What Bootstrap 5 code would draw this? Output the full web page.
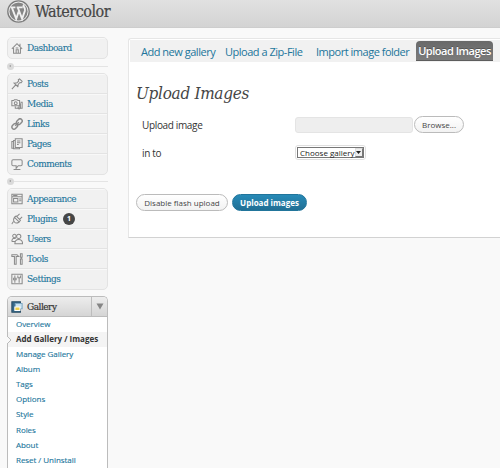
<!DOCTYPE html>
<html lang="en">
<head>
<meta charset="utf-8">
<title>Watercolor</title>
<link href="https://cdn.jsdelivr.net/npm/bootstrap@5.3.0/dist/css/bootstrap.min.css" rel="stylesheet">
<style>
html,body{height:468px;overflow:hidden}
body{background:#f9f9f9;font-family:"Open Sans","Noto Sans",sans-serif;font-size:11px;color:#333;line-height:1}
a{color:#21759b;text-decoration:none;white-space:nowrap}
svg{display:block;flex:none}
.serif{font-family:"DejaVu Serif Condensed","DejaVu Serif","Liberation Serif",serif}
.topbar{height:28px;background:linear-gradient(#e1e1e1,#d3d3d3);border-bottom:1px solid #cdcdcd;padding-left:7px;gap:5px}
.topbar svg{margin-top:-5px}
.site{font-size:16px;color:#464646;margin-top:-4px;letter-spacing:-.5px;-webkit-text-stroke:.2px #464646}
.side{width:101px;margin:9px 0 0 7px}
.box{border:1px solid #e3e3e3;border-radius:5px;background:#f1f1f1;overflow:hidden;width:101px}
.box a{height:20px;padding-left:3px;gap:4px;font-size:10px;letter-spacing:-.55px;border-bottom:1px solid #e3e3e3;box-shadow:inset 0 1px #f8f8f8;-webkit-text-stroke:.1px #21759b}
.box a:last-child{border-bottom:0}
.box svg,.ghead svg{width:12px;height:12px;fill:none;stroke:#8a8a8a;stroke-width:1.2}
.sep{height:14px}
.sep.short{height:13px}
.sep i{width:7px;height:7px;border-radius:50%;background:#dadada;position:relative}
.sep i::after{content:"";position:absolute;left:2px;top:2px;border:1.5px solid transparent;border-right:2px solid #999;border-left:0}
.sep b{height:1px;background:#e4e4e4;flex:1}
.count{width:12px;height:12px;border-radius:50%;background:#464646;color:#fff;font:bold 7px/12px "Open Sans",sans-serif;letter-spacing:0;text-align:center;margin-left:2px;-webkit-text-stroke:0}
.gal{border:1px solid #bcbcbc;border-bottom:0;border-radius:5px 5px 0 0;width:101px;height:173px;background:#fff;margin-top:6px}
.ghead{height:20px;background:linear-gradient(#ededed,#d5d5d5);border-bottom:1px solid #bcbcbc;border-radius:4px 4px 0 0;padding-left:3px}
.ghead span{font-size:10px;color:#333;margin-left:4px;letter-spacing:-.5px;-webkit-text-stroke:.2px #333}
.arrow{width:16px;height:19px;border-left:1px solid #bdbdbd}
.gal a{display:flex;align-items:center;height:15.15px;padding:0 0 2px 8px;font-size:8px;letter-spacing:-.05px;-webkit-text-stroke:.12px #21759b}
.gal a.on{background:#f4f4f4;color:#333;font-weight:700;letter-spacing:0;position:relative;-webkit-text-stroke:0}
.on svg{position:absolute;left:-1px;top:4px}
.panel{margin:10px 0 0 20px;height:200px;background:#fff;border:1px solid #e6e6e6;border-right:0;border-bottom-color:#d2d2d2;border-radius:3px 0 0 0;min-width:0}
.tabs{height:22px;background:#f1f1f1;margin:1px 0 0 1px;padding:1px 0 1px 11px;font-size:11px;letter-spacing:-.48px}
.tabs a{flex:none}
.tabs a.sel{width:77px;height:20px;background:linear-gradient(#696969,#7b7b7b);color:#fff;border-radius:4px 4px 0 0;font-weight:600;text-shadow:0 -1px #555;border-bottom:1px solid #5d5d5d}
h2{font-size:17px;font-style:italic;letter-spacing:-.3px;color:#464646;margin:21px 0 0 7px;line-height:20px}
.lab{width:153px;font-size:10px;letter-spacing:-.35px}
.r1{margin:13px 0 0 13px;height:17px}.r2{margin:12px 0 0 13px;height:15px}
.field{width:118px;height:16px;background:#eee;border:1px solid #e4e4e4;border-radius:3px;margin-right:1px}
.pill{height:17px;border:1px solid #bbb;border-radius:9px;background:linear-gradient(#fff,#f2f2f2);color:#464646;font-size:8px;padding:0;white-space:nowrap;line-height:15px}
.pick{width:71px;height:15px;border:1px solid #dfdfdf;border-radius:3px;padding:1px;background:#fff}
.pick>span{border:1px solid #777;font-size:8px;color:#222;padding-left:2px;height:11px;width:67px;white-space:nowrap}
.drop{width:10px;height:9px;background:#eee;border:1px solid #777;border-top-color:#ddd;border-left-color:#ddd}
.acts{margin:34px 0 0 7px;gap:4px}
.pill.blue{background:linear-gradient(#278ab7,#216f94);border-color:#21759b;color:#fff;font-weight:700}
</style>
</head>
<body>
<header class="topbar d-flex align-items-center">
<svg width="23" height="23" viewBox="0 0 23 23"><circle cx="11.5" cy="11.5" r="10.7" fill="#eee" stroke="#7c7c7c" stroke-width="1.3"/><circle cx="11.5" cy="11.5" r="9.1" fill="#858585"/><path d="M3.4 7.4h5M9.700 7.400h6M5 7.800l4.200 11 2.500-7.200M10.900 7.800l4.200 11 2.800-8.100q.5-2.200-.9-3.700-1.200-1.600.4-2.100" fill="none" stroke="#f0f0f0" stroke-width="1.9"/></svg>
<span class="serif site">Watercolor</span>
</header>
<div class="d-flex">
<nav class="side flex-shrink-0">
<div class="box serif"><a class="d-flex align-items-center" href="#"><svg viewBox="0 0 14 14"><path d="M1 8l6-6 6 6M3 7v6h8V7M6 13V9h2.500v4M10.500 5V2M5.500 7h3"/></svg><span>Dashboard</span></a></div>
<div class="sep d-flex align-items-center"><i></i><b></b></div>
<div class="box serif">
<a class="d-flex align-items-center" href="#"><svg viewBox="0 0 14 14"><path d="M1 13l4.500-5M3 5.500l5.500 5M4 6l3-.5 2-2L8.500 2 10 1l3 3-1 1.500-1.500-.3-2 2L8 10"/></svg><span>Posts</span></a>
<a class="d-flex align-items-center" href="#"><svg viewBox="0 0 14 14"><path d="M1 3h2l1-1h3l1 1h2v6H1zM11 5h2v7H5v-2M11 6v6"/><circle cx="5.500" cy="6" r="1.700"/><circle cx="9.500" cy="11.500" r="1.300"/></svg><span>Media</span></a>
<a class="d-flex align-items-center" href="#"><svg viewBox="0 0 14 14"><g transform="rotate(-45 7 7)" stroke-width="1.700"><rect x="-.5" y="4.500" width="7.500" height="5" rx="2.500"/><rect x="7" y="4.500" width="7.500" height="5" rx="2.500"/><path d="M4 7h6"/></g></svg><span>Links</span></a>
<a class="d-flex align-items-center" href="#"><svg viewBox="0 0 14 14"><path d="M5 1h8v10H5zM5 3H3v9.500h7V11M3 4H1v8h2M7 3.500h4M7 5.500h4M7 7.500h2"/></svg><span>Pages</span></a>
<a class="d-flex align-items-center" href="#"><svg viewBox="0 0 14 14"><path d="M2.500 2h9q1.500 0 1.500 1.500v4Q13 9 11.500 9H8.500L6 12V9H2.500Q1 9 1 7.500v-4Q1 2 2.500 2zM3 13.500h8"/></svg><span>Comments</span></a>
</div>
<div class="sep short d-flex align-items-center"><i></i><b></b></div>
<div class="box serif">
<a class="d-flex align-items-center" href="#"><svg viewBox="0 0 14 14"><path d="M1 1.500h12v11H1zM1 4.500h12M3 6.500h5v4H3zM9.500 7H12M9.500 9H12M2.500 3h5"/></svg><span>Appearance</span></a>
<a class="d-flex align-items-center" href="#"><svg viewBox="0 0 14 14"><path d="M1 13q1-3 3-3M4 5l5.500 5.500Q6 13 4 10.500 2 8 4 5zM4 5l2-1.500 5 5-1.500 2M7 4l3-3M10 7.500l3-3"/></svg><span>Plugins</span><span class="count">1</span></a>
<a class="d-flex align-items-center" href="#"><svg viewBox="0 0 14 14"><circle cx="4" cy="3.500" r="2"/><circle cx="9" cy="4" r="2.500"/><path d="M4.500 12.500q0-5 4.500-5t4.500 5zM1 10q0-4 3-4l1.500.5M1 10h3.500"/></svg><span>Users</span></a>
<a class="d-flex align-items-center" href="#"><svg viewBox="0 0 14 14"><path d="M1 4V2h6l2 2H6v9H4V4zM11 1h2v4h-1v2h1v6h-2V7h1V5h-1z"/></svg><span>Tools</span></a>
<a class="d-flex align-items-center" href="#"><svg viewBox="0 0 14 14"><path d="M1 1.500h12v11H1zM4.500 3v3M3 6h3v2H3zM4.500 8v3.500M8 3v2.500h3V3M9.500 5.500v6"/></svg><span>Settings</span></a>
</div>
<div class="gal">
<div class="ghead d-flex align-items-center"><svg viewBox="0 0 14 14"><path d="M1 1h10v12H1z" fill="#376889" stroke="#294c64"/><path d="M5 3h8v6H5z" fill="#c9e2f1" stroke="#7fa9c4"/><path d="M4.500 7h6v4h-6z" fill="#eed04b" stroke="#fff"/></svg><span class="serif">Gallery</span><div class="arrow ms-auto d-flex align-items-center justify-content-center"><svg style="width:8px;height:7px" viewBox="0 0 8 7"><path d="M.5.500h7L4 6.500z" fill="#858585" stroke="none"/></svg></div></div>
<a href="#">Overview</a>
<a href="#" class="on"><svg width="5" height="8"><path d="M0 0l4 4-4 4" fill="#f9f9f9" stroke="#bbb"/></svg>Add Gallery / Images</a>
<a href="#">Manage Gallery</a><a href="#">Album</a><a href="#">Tags</a><a href="#">Options</a><a href="#">Style</a><a href="#">Roles</a><a href="#">About</a><a href="#">Reset / Uninstall</a>
</div>
</nav>
<main class="panel flex-grow-1">
<div class="tabs d-flex align-items-center"><a href="#" style="width:84px">Add new gallery</a><a href="#" style="width:91px">Upload a Zip-File</a><a href="#" style="width:100px">Import image folder</a><a href="#" class="sel d-flex align-items-center justify-content-center">Upload Images</a></div>
<h2 class="serif">Upload Images</h2>
<div class="r1 d-flex align-items-center"><label class="lab">Upload image</label><div class="field"></div><button class="pill" style="width:50px">Browse...</button></div>
<div class="r2 d-flex align-items-center"><label class="lab">in to</label><div class="pick"><span class="d-flex align-items-center justify-content-between">Choose gallery<i class="drop d-flex align-items-center justify-content-center"><svg width="5" height="3"><path d="M0 0h5L2.500 3z" fill="#222"/></svg></i></span></div></div>
<div class="acts d-flex"><button class="pill" style="width:92px">Disable flash upload</button><button class="pill blue" style="width:75px">Upload images</button></div>
</main>
</div>
<script src="https://cdn.jsdelivr.net/npm/bootstrap@5.3.0/dist/js/bootstrap.bundle.min.js"></script>
</body>
</html>
